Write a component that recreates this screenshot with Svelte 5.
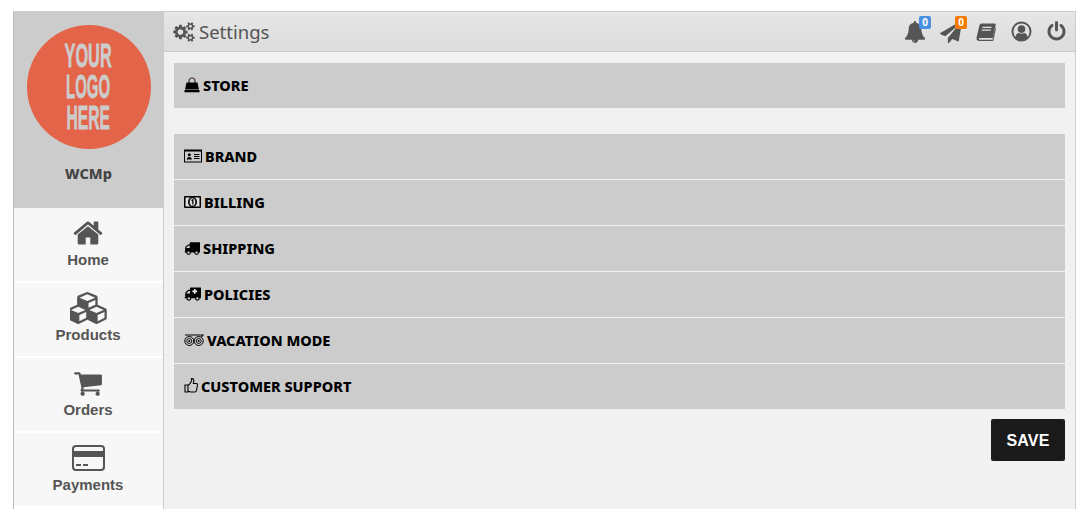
<script>
  const navItems = [
    { label: 'Home', vb: '0 0 1792 1792', w: 32, h: 32, d: 'M1472 992v480q0 26-19 45t-45 19h-384v-384h-256v384h-384q-26 0-45-19t-19-45v-480q0-1 .5-3t.5-3l575-474 575 474q1 2 1 6zm223-69l-62 74q-8 9-21 11h-3q-13 0-21-7l-692-577-692 577q-12 8-24 7-13-2-21-11l-62-74q-8-10-7-23.5t11-21.5l719-599q32-26 76-26t76 26l244 204v-195q0-14 9-23t23-9h192q14 0 23 9t9 23v408l219 182q10 8 11 21.5t-7 23.5z' },
    { label: 'Products', vb: '0 0 2048 1792', w: 37, h: 32, d: 'M512 1632l384-192v-314l-384 164v342zm-64-454l404-173-404-173-404 173zm1088 454l384-192v-314l-384 164v342zm-64-454l404-173-404-173-404 173zm-448-293l384-165v-266l-384 164v267zm-64-379l441-189-441-189-441 189zm1088 518v416q0 36-19 67t-52 47l-448 224q-25 14-57 14t-57-14l-448-224q-4-2-7-4-2 2-6 4l-448 224q-25 14-57 14t-57-14l-448-224q-33-16-52-47t-19-67v-416q0-38 21.5-70t56.5-48l434-186v-400q0-38 21.5-70t56.5-48l448-192q23-10 50-10t50 10l448 192q35 16 56.5 48t21.5 70v400l434 186q36 16 57 48t21 70z' },
    { label: 'Orders', vb: '0 0 1792 1792', w: 30, h: 30, d: 'M704 1536q0 52-38 90t-90 38-90-38-38-90 38-90 90-38 90 38 38 90zm896 0q0 52-38 90t-90 38-90-38-38-90 38-90 90-38 90 38 38 90zm128-1088v512q0 24-16.5 42.5t-40.5 21.5l-1044 122q13 60 13 70 0 16-24 64h920q26 0 45 19t19 45-19 45-45 19h-1024q-26 0-45-19t-19-45q0-11 8-31.5t16-36 21.5-40 15.5-29.5l-177-823h-204q-26 0-45-19t-19-45 19-45 45-19h256q16 0 28.5 6.5t19.5 15.5 13 24.5 8 26 5.5 29.5 4.5 26h1201q26 0 45 19t19 45z' }
  ];
  const truck = 'M640 1408q0-52-38-90t-90-38-90 38-38 90 38 90 90 38 90-38 38-90zm-384-512h384v-256h-158q-13 0-22 9l-195 195q-9 9-9 22v30zm1280 512q0-52-38-90t-90-38-90 38-38 90 38 90 90 38 90-38 38-90zm256-1088v1024q0 15-4 26.5t-13.5 18.5-16.5 11.5-23.5 6-22.5 2-25.5 0-22.5-.5q0 106-75 181t-181 75-181-75-75-181h-384q0 106-75 181t-181 75-181-75-75-181h-64q-3 0-22.5.5t-25.5 0-22.5-2-23.5-6-16.5-11.5-13.5-18.5-4-26.5q0-26 19-45t45-19v-320q0-8-.5-35t0-38 2.5-34.5 6.5-37 14-30.5 22.5-30l198-198q19-19 50.5-32t58.5-13h160v-192q0-26 19-45t45-19h1024q26 0 45 19t19 45z';
</script>

<div class="frame">
  <aside class="side">
    <div class="brand">
      <div class="logo">
        <span class="l1">YOUR</span>
        <span class="l2">LOGO</span>
        <span class="l3">HERE</span>
      </div>
      <div class="shopname">WCMp</div>
    </div>
    <nav class="nav">
      {#each navItems as item}
        <div class="navitem">
          <div class="iconbox"><svg viewBox={item.vb} width={item.w} height={item.h}><path d={item.d} /></svg></div>
          <span>{item.label}</span>
        </div>
      {/each}
      <div class="navitem">
        <div class="iconbox">
          <svg viewBox="0 0 33 26" width="33" height="26">
            <rect x="1" y="1" width="31" height="24" rx="3" fill="none" stroke="#555" stroke-width="2" />
            <rect x="1" y="6" width="31" height="6" fill="#555" />
            <rect x="4" y="19" width="5" height="2" fill="#555" />
            <rect x="11" y="19" width="5" height="2" fill="#555" />
          </svg>
        </div>
        <span>Payments</span>
      </div>
    </nav>
  </aside>

  <main class="main">
    <header class="topbar">
      <h1 class="title">
        <svg viewBox="0 0 1920 1792" width="22" height="20"><path fill="#555" d="M896 896q0-106-75-181t-181-75-181 75-75 181 75 181 181 75 181-75 75-181zm768 512q0-52-38-90t-90-38-90 38-38 90q0 53 37.5 90.5t90.5 37.5 90.5-37.5 37.5-90.5zm0-1024q0-52-38-90t-90-38-90 38-38 90q0 53 37.5 90.5t90.5 37.5 90.5-37.5 37.5-90.5zm-384 421v185q0 10-7 19.5t-16 10.5l-155 24q-11 35-32 76 34 48 90 115 7 11 7 20 0 12-7 19-23 30-82.5 89.5t-78.5 59.5q-11 0-21-7l-115-90q-37 19-77 31-11 108-23 155-7 24-30 24h-186q-11 0-20-7.5t-10-17.5l-23-153q-34-10-75-31l-118 89q-7 7-20 7-11 0-21-8-144-133-144-160 0-9 7-19 10-14 41-53t47-61q-23-44-35-82l-152-24q-10-1-17-9.5t-7-19.5v-185q0-10 7-19.5t16-10.5l155-24q11-35 32-76-34-48-90-115-7-11-7-20 0-12 7-20 22-30 82-89t79-59q11 0 21 7l115 90q34-18 77-32 11-108 23-154 7-24 30-24h186q11 0 20 7.5t10 17.5l23 153q34 10 75 31l118-89q8-7 20-7 11 0 21 8 144 133 144 160 0 8-7 19-12 16-42 54t-45 60q23 48 34 82l152 23q10 2 17 10.5t7 19.5zm640 533v140q0 16-149 31-12 27-30 52 51 113 51 138 0 4-4 7-122 71-124 71-8 0-46-47t-52-68q-20 2-30 2t-30-2q-14 21-52 68t-46 47q-2 0-124-71-4-3-4-7 0-25 51-138-18-25-30-52-149-15-149-31v-140q0-16 149-31 13-29 30-52-51-113-51-138 0-4 4-7 4-2 35-20t59-34 30-16q8 0 46 46.5t52 67.5q20-2 30-2t30 2q51-71 92-112l6-2q4 0 124 70 4 3 4 7 0 25-51 138 17 23 30 52 149 15 149 31zm0-1024v140q0 16-149 31-12 27-30 52 51 113 51 138 0 4-4 7-122 71-124 71-8 0-46-47t-52-68q-20 2-30 2t-30-2q-14 21-52 68t-46 47q-2 0-124-71-4-3-4-7 0-25 51-138-18-25-30-52-149-15-149-31v-140q0-16 149-31 13-29 30-52-51-113-51-138 0-4 4-7 4-2 35-20t59-34 30-16q8 0 46 46.5t52 67.5q20-2 30-2t30 2q51-71 92-112l6-2q4 0 124 70 4 3 4 7 0 25-51 138 17 23 30 52 149 15 149 31z"/></svg>
        <span>Settings</span>
      </h1>
      <div class="tools">
        <div class="tool bell">
          <svg viewBox="0 0 1792 1792" width="22" height="22"><path d="M912 1696q0-16-16-16-59 0-101.5-42.5t-42.5-101.5q0-16-16-16t-16 16q0 73 51.5 124.5t124.5 51.5q16 0 16-16zm816-288q0 52-38 90t-90 38h-448q0 106-75 181t-181 75-181-75-75-181h-448q-52 0-90-38t-38-90q50-42 91-88t85-119.5 74.5-158.5 50-206 19.5-260q0-152 117-282.5t307-158.5q-8-19-8-39 0-40 28-68t68-28 68 28 28 68q0 20-8 39 190 28 307 158.5t117 282.5q0 139 19.5 260t50 206 74.5 158.5 85 119.5 91 88z"/></svg>
          <b class="badge blue">0</b>
        </div>
        <div class="tool">
          <svg viewBox="0 0 1792 1792" width="22" height="22"><path d="M1764 11q33 24 27 64l-256 1536q-5 29-32 45-14 8-31 8-11 0-24-5l-453-185-242 295q-18 23-49 23-13 0-22-4-19-7-30.5-23.5t-11.5-36.5v-349l864-1059-1069 925-395-162q-37-14-40-55-2-40 32-59l1664-960q15-9 32-9 20 0 36 11z"/></svg>
          <b class="badge orange">0</b>
        </div>
        <div class="tool">
          <svg viewBox="0 0 20 18" width="20" height="18">
            <path fill-rule="evenodd" d="M5.500 0.500H19Q20 1 19.700 2L17.300 13.500Q17 15 15.500 15H4Q2.700 15 2.800 15.800T4 16.800H16.500L18.800 5H20L17.500 17.200Q17.300 18 16.500 18H3Q0.500 18 0.500 15Q0.500 14.500 0.800 13.500L3.500 2Q3.900 0.500 5.500 0.500ZM6.700 3.700L6.400 5H15.400L15.700 3.700ZM6 6.500L5.700 7.800H14.700L15 6.500Z" />
          </svg>
        </div>
        <div class="tool">
          <svg viewBox="0 0 22 22" width="21" height="21">
            <circle cx="11" cy="11" r="9.500" fill="none" stroke="#555" stroke-width="2" />
            <circle cx="11" cy="8.500" r="4" />
            <path d="M4.500 17q1-4.500 4-4.500 2.500 1.500 5 0 3 0 4 4.500-3 3.500-6.500 3.500T4.500 17z" />
          </svg>
        </div>
        <div class="tool">
          <svg viewBox="0 0 1792 1792" width="21" height="21"><path d="M1664 896q0 156-61 298t-164 245-245 164-298 61-298-61-245-164-164-245-61-298q0-182 80.500-343t226.500-270q43-32 95.500-25t83.500 50q32 42 24.500 94.500t-49.500 84.500q-98 74-151.500 181t-53.500 228q0 104 40.500 198.500t109.500 163.500 163.500 109.500 198.500 40.500 198.500-40.500 163.500-109.500 109.500-163.500 40.500-198.500q0-121-53.500-228t-151.500-181q-42-32-49.500-84.500t24.500-94.500q31-43 84-50t95 25q146 109 226.500 270t80.500 343zm-640-768v640q0 52-38 90t-90 38-90-38-38-90v-640q0-52 38-90t90-38 90 38 38 90z"/></svg>
        </div>
      </div>
    </header>

    <section class="content">
      <div class="group store">
        <div class="row">
          <svg viewBox="0 0 16 16" width="16" height="16">
            <path d="M5 6V4a3 3 0 0 1 6 0v2" fill="none" stroke="#4a2a45" stroke-width="1.200" />
            <path d="M2.500 5.500h11L15 12.500H1z" />
            <rect x="0.500" y="13" width="15" height="2.300" />
          </svg>
          <span>STORE</span>
        </div>
      </div>

      <div class="group">
        <div class="row">
          <svg viewBox="0 0 18 14" width="18" height="14">
            <rect x="0.500" y="1" width="17" height="12" fill="none" stroke="#000" />
            <rect x="0.500" y="1" width="17" height="1.500" />
            <circle cx="5.300" cy="5.800" r="1.500" />
            <path d="M2.800 10.500q0-2.500 2.500-2.500t2.500 2.500z" />
            <path d="M10 5.500h5.500M10 7.500h5.500M10 9.500h5.500" stroke="#000" stroke-width="1" fill="none" />
          </svg>
          <span>BRAND</span>
        </div>
        <div class="row">
          <svg viewBox="0 0 17 12" width="17" height="12">
            <rect x="0" y="0" width="17" height="12" rx="1" fill="#000" />
            <rect x="1.500" y="1.500" width="14" height="9" fill="#ddd" />
            <ellipse cx="8.500" cy="6" rx="4.500" ry="5" fill="#000" />
            <ellipse cx="8.500" cy="6" rx="2.800" ry="3.800" fill="#ddd" />
            <path d="M7.400 4.600L8.800 3.800V8.500" stroke="#000" stroke-width="1.200" fill="none" />
          </svg>
          <span>BILLING</span>
        </div>
        <div class="row">
          <svg viewBox="0 0 1792 1792" width="16" height="16"><path d={truck} /></svg>
          <span>SHIPPING</span>
        </div>
        <div class="row">
          <svg viewBox="0 0 1792 1792" width="17" height="17">
            <path d={truck} />
            <path d="M1050 420h170v170h170v170h-170v170h-170v-170h-170v-170h170z" fill="#eee" />
          </svg>
          <span>POLICIES</span>
        </div>
        <div class="row">
          <svg viewBox="0 0 20 14" width="20" height="14">
            <path d="M1 2h18l-1.500 2" fill="none" stroke="#000" stroke-width="1.200" />
            <circle cx="5.300" cy="8" r="4.500" fill="none" stroke="#000" />
            <circle cx="14.700" cy="8" r="4.500" fill="none" stroke="#000" />
            <circle cx="5.300" cy="8" r="2.500" fill="none" stroke="#000" stroke-width="0.900" />
            <circle cx="14.700" cy="8" r="2.500" fill="none" stroke="#000" stroke-width="0.900" />
            <circle cx="5.300" cy="8" r="1" />
            <circle cx="14.700" cy="8" r="1" />
          </svg>
          <span>VACATION MODE</span>
        </div>
        <div class="row">
          <svg viewBox="0 0 14 15" width="14" height="15">
            <path d="M1 7h3v7H1zM4 7.500q2-1.500 3-3.500t.500-3.500q2.500 0 2.300 2.500L9.300 5.500h3q1.500 0 1.200 1.500l-1 5.500q-.3 1.500-1.700 1.500H6.500L4 13" fill="none" stroke="#000" stroke-width="1.100" />
          </svg>
          <span>CUSTOMER SUPPORT</span>
        </div>
      </div>

      <div class="actions">
        <button class="save">SAVE</button>
      </div>
    </section>
  </main>
</div>

<style>
  :global(html), :global(body) {
    margin: 0;
    height: 100%;
    overflow: hidden;
    background: #fff;
  }
  .frame {
    display: flex;
    box-sizing: border-box;
    height: 509px;
    margin: 11px 12px 0 13px;
    border: 1px solid #ccc;
    border-left-color: #bbb;
    border-bottom: 0;
    background: #f1f1f1;
    overflow: hidden;
  }
  .side {
    flex: 0 0 149px;
    border-right: 1px solid #ccc;
    background: #fff;
  }
  .brand {
    height: 196px;
    box-sizing: border-box;
    padding-top: 13px;
    background: #ccc;
    text-align: center;
  }
  .logo {
    display: flex;
    flex-direction: column;
    align-items: center;
    justify-content: center;
    box-sizing: border-box;
    width: 124px;
    height: 124px;
    margin: 0 auto;
    padding-bottom: 2px;
    border-radius: 50%;
    background: #e46449;
    font-family: "Liberation Sans", sans-serif;
    font-size: 34px;
    font-weight: 700;
    line-height: 31px;
    color: #ccc;
    -webkit-text-stroke: 0.8px #ccc;
  }
  .logo span { display: block; }
  .l1 { transform: scaleX(0.48); }
  .l2 { transform: scaleX(0.44); }
  .l3 { transform: scaleX(0.46); }
  .shopname {
    margin-top: 15px;
    font-family: "Noto Sans", sans-serif;
    font-size: 14.500px;
    font-weight: 800;
    line-height: 19px;
    color: #444;
  }
  .nav {
    display: flex;
    flex-direction: column;
  }
  .navitem {
    box-sizing: border-box;
    height: 75px;
    padding: 8px 1px 0 0;
    border-bottom: 2px solid #fff;
    background: #f7f7f7;
    text-align: center;
    font-family: "Liberation Sans", sans-serif;
    font-size: 15px;
    font-weight: 700;
    color: #555;
  }
  .iconbox {
    display: flex;
    align-items: center;
    justify-content: center;
    height: 34px;
    fill: #555;
  }
  .navitem span {
    display: block;
    margin-top: 1px;
    line-height: 18px;
  }
  .main {
    flex: 1;
    min-width: 0;
    display: flex;
    flex-direction: column;
  }
  .topbar {
    display: flex;
    align-items: center;
    justify-content: space-between;
    box-sizing: border-box;
    height: 40px;
    padding: 0 8px 0 9px;
    background: linear-gradient(#e6e6e6, #dcdcdc);
    border-bottom: 1px solid #ccc;
  }
  .title {
    display: flex;
    align-items: center;
    gap: 4px;
    margin: 0;
    font-family: "Noto Sans", sans-serif;
    font-size: 18.500px;
    font-weight: 400;
    color: #555;
  }
  .tools {
    display: flex;
    align-items: center;
    gap: 13px;
  }
  .tool {
    position: relative;
    width: 22px;
    height: 22px;
    display: flex;
    align-items: center;
    justify-content: center;
    fill: #555;
  }
  .bell {
    margin-right: 1px;
  }
  .badge {
    position: absolute;
    top: -5px;
    right: -5px;
    width: 12px;
    height: 13px;
    border-radius: 2px;
    font-family: "Noto Sans", sans-serif;
    font-size: 10px;
    line-height: 13px;
    text-align: center;
    color: #fff;
  }
  .blue { background: #4a90e2; }
  .orange { background: #f37b00; }
  .content {
    flex: 1;
    padding: 11px 10px 0;
  }
  .group {
    display: flex;
    flex-direction: column;
    gap: 1px;
  }
  .store {
    margin-bottom: 26px;
  }
  .row {
    display: flex;
    align-items: center;
    gap: 3px;
    box-sizing: border-box;
    height: 45px;
    padding: 0 0 2px 10px;
    background: #ccc;
    font-family: "Noto Sans", sans-serif;
    font-size: 14.500px;
    font-weight: 800;
    color: #000;
  }
  .actions {
    display: flex;
    justify-content: flex-end;
    margin-top: 10px;
  }
  .save {
    width: 74px;
    height: 42px;
    padding: 1px 0 0;
    border: 0;
    border-radius: 2px;
    background: #1a1a1a;
    font-family: "Liberation Sans", sans-serif;
    font-size: 16px;
    font-weight: 700;
    letter-spacing: 0.2px;
    color: #fff;
  }
</style>
